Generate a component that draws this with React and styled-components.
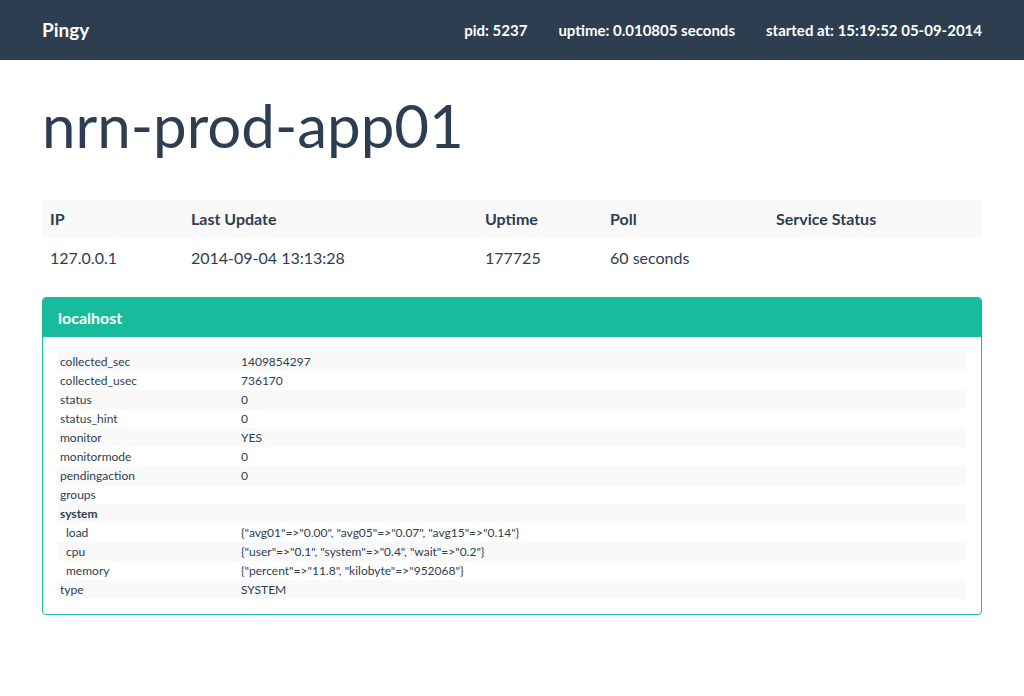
import React from "react";
import styled, { createGlobalStyle } from "styled-components";

const GlobalStyle = createGlobalStyle`
  html, body {
    margin: 0;
    padding: 0;
    background: #ffffff;
    color: #2c3e50;
    font-family: Lato, "Open Sans", "Liberation Sans", sans-serif;
    font-size: 15px;
  }
  * { box-sizing: border-box; }
`;

const hostInfo = {
  ip: "127.0.0.1",
  lastUpdate: "2014-09-04 13:13:28",
  uptime: "177725",
  poll: "60 seconds",
  status: "",
};

const services = [
  { key: "collected_sec", value: "1409854297" },
  { key: "collected_usec", value: "736170" },
  { key: "status", value: "0" },
  { key: "status_hint", value: "0" },
  { key: "monitor", value: "YES" },
  { key: "monitormode", value: "0" },
  { key: "pendingaction", value: "0" },
  { key: "groups", value: "" },
  { key: "system", value: "", bold: true },
  { key: "load", value: '{"avg01"=>"0.00", "avg05"=>"0.07", "avg15"=>"0.14"}', sub: true },
  { key: "cpu", value: '{"user"=>"0.1", "system"=>"0.4", "wait"=>"0.2"}', sub: true },
  { key: "memory", value: '{"percent"=>"11.8", "kilobyte"=>"952068"}', sub: true },
  { key: "type", value: "SYSTEM" },
];

export default function App() {
  return (
    <>
      <GlobalStyle />
      <Navbar>
        <NavInner>
          <Brand>Pingy</Brand>
          <NavStats>
            <NavText>pid: 5237</NavText>
            <NavText>uptime: 0.010805 seconds</NavText>
            <NavText>started at: 15:19:52 05-09-2014</NavText>
          </NavStats>
        </NavInner>
      </Navbar>
      <Container>
        <Title>nrn-prod-app01</Title>
        <HostTable>
          <colgroup>
            <col style={{ width: 141 }} />
            <col style={{ width: 294 }} />
            <col style={{ width: 125 }} />
            <col style={{ width: 166 }} />
            <col />
          </colgroup>
          <thead>
            <HeadRow>
              <HeadCell>IP</HeadCell>
              <HeadCell>Last Update</HeadCell>
              <HeadCell>Uptime</HeadCell>
              <HeadCell>Poll</HeadCell>
              <HeadCell>Service Status</HeadCell>
            </HeadRow>
          </thead>
          <tbody>
            <tr>
              <Cell>{hostInfo.ip}</Cell>
              <Cell>{hostInfo.lastUpdate}</Cell>
              <Cell>{hostInfo.uptime}</Cell>
              <Cell>{hostInfo.poll}</Cell>
              <Cell>{hostInfo.status}</Cell>
            </tr>
          </tbody>
        </HostTable>
        <Panel>
          <PanelHeading>localhost</PanelHeading>
          <PanelBody>
            <ServiceTable>
              <colgroup>
                <col style={{ width: 181 }} />
                <col />
              </colgroup>
              <tbody>
                {services.map((s, i) => (
                  <ServiceRow key={s.key + i} $striped={i % 2 === 0}>
                    <KeyCell $bold={s.bold} $sub={s.sub}>
                      {s.key}
                    </KeyCell>
                    <ValueCell>{s.value}</ValueCell>
                  </ServiceRow>
                ))}
              </tbody>
            </ServiceTable>
          </PanelBody>
        </Panel>
      </Container>
    </>
  );
}

const Navbar = styled.nav`
  height: 60px;
  background-color: #2c3e50;
  color: #ffffff;
`;

const NavInner = styled.div`
  width: 940px;
  margin: 0 auto;
  height: 100%;
  display: flex;
  align-items: center;
  justify-content: space-between;
`;

const Brand = styled.div`
  font-size: 19px;
  font-weight: 700;
  padding-bottom: 2px;
`;

const NavStats = styled.div`
  display: flex;
  gap: 31px;
`;

const NavText = styled.span`
  font-size: 15px;
  font-weight: 700;
`;

const Container = styled.main`
  width: 940px;
  margin: 0 auto;
  padding-top: 32px;
`;

const Title = styled.h1`
  margin: 0 0 42px 0;
  font-size: 60px;
  font-weight: 400;
  line-height: 66px;
`;

const HostTable = styled.table`
  width: 100%;
  border-collapse: collapse;
  table-layout: fixed;
  margin-bottom: 20px;
`;

const HeadRow = styled.tr`
  background-color: #f9f9f9;
`;

const HeadCell = styled.th`
  text-align: left;
  font-size: 16px;
  font-weight: 700;
  height: 37px;
  padding: 0 8px;
`;

const Cell = styled.td`
  font-size: 16px;
  height: 40px;
  padding: 0 8px;
`;

const Panel = styled.section`
  border: 1px solid #18bc9c;
  border-radius: 4px;
  overflow: hidden;
`;

const PanelHeading = styled.div`
  background-color: #18bc9c;
  color: #ffffff;
  height: 39px;
  padding: 0 15px;
  display: flex;
  align-items: center;
  font-size: 16px;
  font-weight: 700;
`;

const PanelBody = styled.div`
  padding: 15px 15px 15px 14px;
`;

const ServiceTable = styled.table`
  width: 100%;
  border-collapse: collapse;
  table-layout: fixed;
`;

const ServiceRow = styled.tr`
  background-color: ${({ $striped }) => ($striped ? "#f9f9f9" : "transparent")};
`;

const KeyCell = styled.td`
  height: 19px;
  font-size: 12px;
  padding: 0 0 0 ${({ $sub }) => ($sub ? "9px" : "3px")};
  font-weight: ${({ $bold }) => ($bold ? 700 : 400)};
`;

const ValueCell = styled.td`
  height: 19px;
  font-size: 12px;
  padding: 0 3px;
`;
